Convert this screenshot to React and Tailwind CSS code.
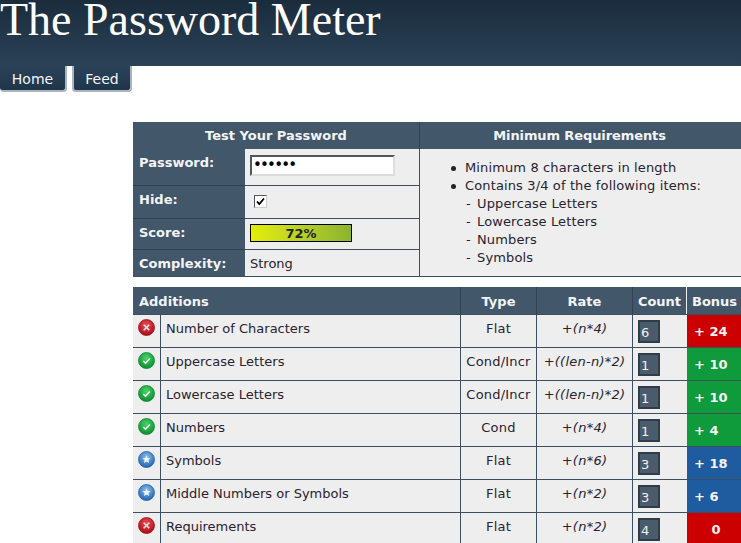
const verdana = { fontFamily: '"DejaVu Sans", Verdana, sans-serif' }

const rows = [
  { icon: 'fail', name: 'Number of Characters', type: 'Flat', rate: '+(n*4)', count: 6, bonus: '+ 24', tone: 'bg-[#cc0000]' },
  { icon: 'pass', name: 'Uppercase Letters', type: 'Cond/Incr', rate: '+((len-n)*2)', count: 1, bonus: '+ 10', tone: 'bg-[#0f9a3c]' },
  { icon: 'pass', name: 'Lowercase Letters', type: 'Cond/Incr', rate: '+((len-n)*2)', count: 1, bonus: '+ 10', tone: 'bg-[#0f9a3c]' },
  { icon: 'pass', name: 'Numbers', type: 'Cond', rate: '+(n*4)', count: 1, bonus: '+ 4', tone: 'bg-[#0f9a3c]' },
  { icon: 'star', name: 'Symbols', type: 'Flat', rate: '+(n*6)', count: 3, bonus: '+ 18', tone: 'bg-[#1f5c9f]' },
  { icon: 'star', name: 'Middle Numbers or Symbols', type: 'Flat', rate: '+(n*2)', count: 3, bonus: '+ 6', tone: 'bg-[#1f5c9f]' },
  { icon: 'fail', name: 'Requirements', type: 'Flat', rate: '+(n*2)', count: 4, bonus: '0', tone: 'bg-[#cc0000]', center: true },
]

const iconColors = {
  fail: ['#e8505a', '#a80d16'],
  pass: ['#4fd36a', '#0b8a2e'],
  star: ['#8fc0ee', '#1f62ad'],
}

function StatusIcon({ kind }) {
  const [light, dark] = iconColors[kind]
  const id = `grad-${kind}`
  return (
    <svg width="17" height="17" viewBox="0 0 17 17">
      <defs>
        <radialGradient id={id} cx="50%" cy="35%" r="65%">
          <stop offset="0%" stopColor={light} />
          <stop offset="100%" stopColor={dark} />
        </radialGradient>
      </defs>
      <circle cx="8.5" cy="8.5" r="8" fill={`url(#${id})`} stroke={dark} strokeWidth="0.8" />
      {kind === 'fail' && <path d="M5.7 5.7l5.6 5.6M11.3 5.7l-5.6 5.6" stroke="#f6dede" strokeWidth="1.6" fill="none" />}
      {kind === 'pass' && <path d="M5.2 9l2.3 2.1L11.8 6.6" stroke="#e8f8ea" strokeWidth="1.5" fill="none" />}
      {kind === 'star' && <path d="M8.5 4.2l1.2 2.7 2.9.3-2.2 1.9.7 2.9-2.6-1.5-2.6 1.5.7-2.9-2.2-1.9 2.9-.3z" fill="#eef5fb" />}
    </svg>
  )
}

function Label({ children, last }) {
  return (
    <div className={`bg-[#43576a] pl-[6px] pt-[5px] font-bold text-[#f2f4f6] ${last ? '' : 'border-b border-[#2f4152]'}`}>
      {children}
    </div>
  )
}

function Value({ children, last }) {
  return <div className={`pl-[5px] ${last ? '' : 'border-b border-[#3c4f61]'}`}>{children}</div>
}

function Bullet({ children }) {
  return (
    <li className="relative tracking-[0.13px]">
      <span className="absolute top-[7px] -left-[14px] h-[5px] w-[5px] rounded-full bg-[#222]"></span>
      {children}
    </li>
  )
}

function Dash({ children }) {
  return (
    <li className="pl-px tracking-[0.13px]">
      <span className="inline-block w-[11px]">-</span>
      {children}
    </li>
  )
}

export default function App() {
  return (
    <div className="h-[543px] w-[741px] overflow-hidden bg-white text-[13px] leading-[18px] text-[#2a2230]" style={verdana}>
      <div className="h-[66px] bg-gradient-to-b from-[#1a2c3c] to-[#2b4257]">
        <h1 className="text-[46px] leading-[40px] font-normal whitespace-nowrap text-white" style={{ fontFamily: '"Liberation Serif", Georgia, serif' }}>
          The Password Meter
        </h1>
      </div>

      <div className="flex h-[27px] gap-[5px]">
        <a className="flex h-[26px] w-[67px] items-center justify-center rounded-b-[4px] border-r-2 border-b-2 border-[#a9b4bf] bg-gradient-to-b from-[#2b4359] to-[#1f3549] pt-px text-[14px] text-[#f3f5f7]">Home</a>
        <a className="flex h-[26px] w-[60px] items-center justify-center rounded-b-[4px] border-x-2 border-b-2 border-[#a9b4bf] bg-gradient-to-b from-[#2b4359] to-[#1f3549] pt-px text-[14px] text-[#f3f5f7]">Feed</a>
      </div>

      <div className="mt-[29px] ml-[133px] w-[620px]">
        <div className="grid h-[155px] grid-cols-[112px_174px_1fr] grid-rows-[27px_37px_33px_31px_26px] border-b border-[#3c4f61] bg-[#eeeeee]">
          <div className="col-span-2 bg-[#43576a] pt-[5px] text-center font-bold text-[#f2f4f6]">Test Your Password</div>
          <div className="border-l border-[#2f4152] bg-[#43576a] pt-[5px] pr-[14px] text-center font-bold tracking-[-0.1px] text-[#f2f4f6]">Minimum Requirements</div>

          <Label>Password:</Label>
          <Value>
            <div className="mt-[6px] flex h-[21px] w-[145px] items-center border-2 border-t-[#555] border-r-[#ddd] border-b-[#ddd] border-l-[#555] bg-white pl-[1px] text-[15px] leading-none tracking-[-1.8px] text-black">
              ••••••
            </div>
          </Value>
          <div className="row-span-4 border-l border-[#3c4f61] pt-[10px]">
            <ul className="ml-[45px]">
              <Bullet>Minimum 8 characters in length</Bullet>
              <Bullet>Contains 3/4 of the following items:</Bullet>
              <Dash>Uppercase Letters</Dash>
              <Dash>Lowercase Letters</Dash>
              <Dash>Numbers</Dash>
              <Dash>Symbols</Dash>
            </ul>
          </div>

          <Label>Hide:</Label>
          <Value>
            <div className="mt-[9px] ml-[4px] flex h-[13px] w-[13px] items-center justify-center border border-t-[#555] border-r-[#ccc] border-b-[#ccc] border-l-[#555] bg-white">
              <svg width="9" height="9" viewBox="0 0 9 9"><path d="M1 4.5l2.3 2.6L8 1.5" stroke="#000" strokeWidth="1.8" fill="none" /></svg>
            </div>
          </Value>

          <Label>Score:</Label>
          <Value>
            <div className="mt-[5px] h-[18px] w-[102px] border border-black bg-gradient-to-r from-[#e4ee00] to-[#8db32f] text-center text-[13px] leading-[17px] font-bold text-[#222]">72%</div>
          </Value>

          <Label last>Complexity:</Label>
          <Value last><div className="pt-[5px]">Strong</div></Value>
        </div>

        <div className="mt-[10px] grid grid-cols-[327px_76px_96px_54px_1fr] border-b border-[#3c4f61] bg-[#eeeeee]">
          <div className="h-[27px] bg-[#43576a] pt-[6px] pl-[6px] font-bold text-[#f2f4f6]">Additions</div>
          <div className="h-[27px] border-l border-[#2f4152] bg-[#43576a] pt-[6px] text-center font-bold text-[#f2f4f6]">Type</div>
          <div className="h-[27px] border-l border-[#2f4152] bg-[#43576a] pt-[6px] text-center font-bold text-[#f2f4f6]">Rate</div>
          <div className="h-[27px] border-l border-[#2f4152] bg-[#43576a] pt-[6px] text-center font-bold text-[#f2f4f6]">Count</div>
          <div className="h-[27px] border-l border-[#eeeeee] bg-[#43576a] pt-[6px] pl-[5px] font-bold text-[#f2f4f6]">Bonus</div>

          {rows.map((row) => (
            <div key={row.name} className="col-span-5 grid h-[33px] grid-cols-[327px_76px_96px_54px_1fr] border-t border-[#3c4f61]">
              <div className="flex">
                <div className="w-[28px] shrink-0 border-r border-[#3c4f61] pt-[4px] pl-[5px]"><StatusIcon kind={row.icon} /></div>
                <div className="pt-[5px] pl-[5px]">{row.name}</div>
              </div>
              <div className="border-l border-[#3c4f61] pt-[5px] text-center tracking-[0.2px]">{row.type}</div>
              <div className="border-l border-[#3c4f61] pt-[5px] text-center tracking-[0.25px] whitespace-nowrap italic">{row.rate}</div>
              <div className="border-l border-[#3c4f61] pt-[5px] pl-[5px]">
                <div className="h-[23px] w-[22px] border-2 border-[#2f3d4a] bg-[#4a5b6c] pt-[3px] pl-[1px] leading-[16px] text-[#eef1f4]">{row.count}</div>
              </div>
              <div className={`${row.tone} ml-px pt-[8px] font-bold text-[#f4f4f4] ${row.center ? 'pr-[8px] text-center' : 'pl-[7px]'}`}>{row.bonus}</div>
            </div>
          ))}
        </div>
      </div>
    </div>
  )
}
